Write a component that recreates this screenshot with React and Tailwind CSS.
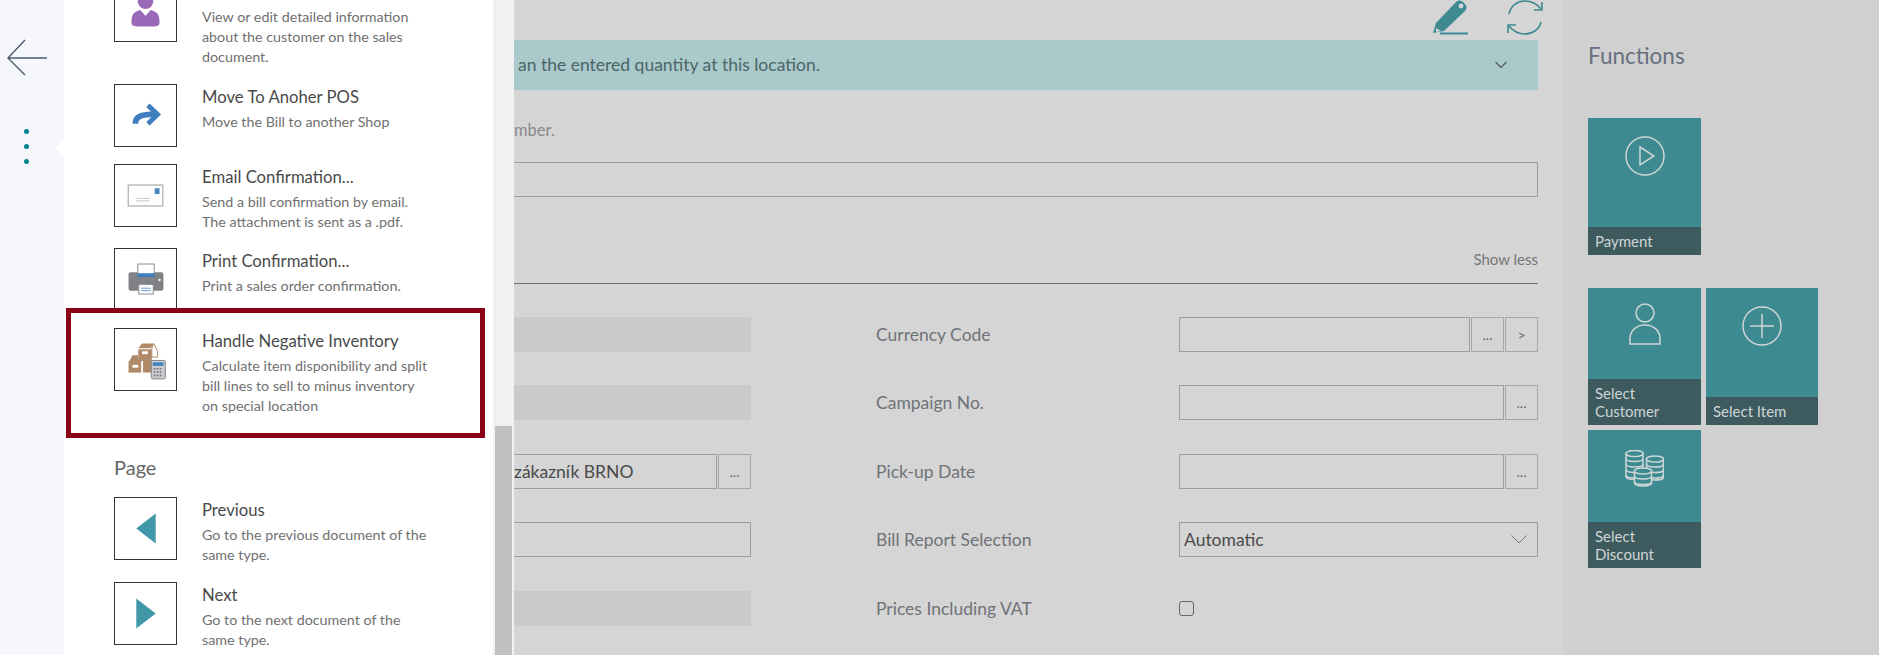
import React from 'react'

const font = { fontFamily: 'Lato, "Open Sans", sans-serif' }

const PersonIcon = () => (
  <svg viewBox="0 0 63 63" className="w-full h-full">
    <circle cx="31.5" cy="22" r="8" fill="#9a6ab8" />
    <path d="M17 44 C17 36 19 33 26 31 L31.5 37 L37 31 C44 33 46 36 46 44 C46 47 44 48 40 48 L23 48 C19 48 17 47 17 44 Z" fill="#9a6ab8" />
  </svg>
)

const MoveIcon = () => (
  <svg viewBox="0 0 63 63" className="w-full h-full" fill="none" stroke="#3f7fbf">
    <path d="M21 40 C21 33 26 30 42 30" strokeWidth="6" />
    <path d="M34 21 L44 30.5 L34 40" strokeWidth="5" />
  </svg>
)

const MailIcon = () => (
  <svg viewBox="0 0 63 63" className="w-full h-full">
    <rect x="13.7" y="20.7" width="35.6" height="21.6" fill="#fff" stroke="#b5b8b8" strokeWidth="1.4" />
    <rect x="41" y="24" width="5" height="6" fill="#4a86c0" />
    <path d="M22 34.5 H36 M22 37 H36" stroke="#c4c4c4" strokeWidth="1" />
  </svg>
)

const PrintIcon = () => (
  <svg viewBox="0 0 63 63" className="w-full h-full">
    <rect x="14" y="24" width="36" height="19" rx="2" fill="#808285" />
    <rect x="23.5" y="15.5" width="17" height="12" fill="#fff" stroke="#8a8a8a" />
    <rect x="23" y="25" width="18" height="4" fill="#3f7fbf" />
    <rect x="24.5" y="36.5" width="15" height="10" fill="#fff" stroke="#8a8a8a" />
    <path d="M27 40.5 H37 M27 43 H37" stroke="#5b93cc" strokeWidth="1" />
    <circle cx="46" cy="32" r="1.2" fill="#fff" />
  </svg>
)

const InventoryIcon = () => (
  <svg viewBox="0 0 63 63" className="w-full h-full">
    <path d="M28 15 H40 L37 20 H24 Z" fill="#b08a68" />
    <path d="M40 15 L44 23 V29 H38 V20 Z" fill="#fff" stroke="#b08a68" />
    <rect x="24" y="21" width="14" height="11" fill="#b08a68" />
    <rect x="28" y="23" width="6" height="3" fill="#fff" />
    <path d="M18 27 H24 V32 H38 V33 H15 Z" fill="#b08a68" />
    <rect x="14" y="33" width="13" height="12" fill="#b08a68" />
    <rect x="18" y="37" width="6" height="3" fill="#fff" />
    <rect x="29" y="33" width="9" height="12" fill="#b08a68" />
    <rect x="37.5" y="32.5" width="14.5" height="19" rx="1.5" fill="#c9cbce" stroke="#7f8387" />
    <rect x="39" y="34.5" width="11" height="3.5" fill="#3f7fbf" />
    <path d="M40 41 H49 M40 44.5 H49 M40 48 H49" stroke="#6d7175" strokeWidth="1.6" strokeDasharray="1.7 1.4" />
  </svg>
)

const PrevIcon = () => (
  <svg viewBox="0 0 63 63" className="w-full h-full">
    <polygon points="42,16 42,47 22,31.5" fill="#3f97a8" />
  </svg>
)

const NextIcon = () => (
  <svg viewBox="0 0 63 63" className="w-full h-full">
    <polygon points="22,16 22,47 42,31.5" fill="#3f97a8" />
  </svg>
)

const MenuItem = ({ icon: Icon, title, lines, className }) => (
  <div className={`flex gap-[25px] ${className || ''}`}>
    <div className="w-[63px] h-[63px] shrink-0 border border-[#333]">
      <Icon />
    </div>
    <div className="min-w-0">
      <div className="h-6 leading-[26px] text-[16.7px] text-[#4a4a4a] whitespace-nowrap">{title}</div>
      <div className="mt-1 text-[14.3px] leading-5 text-[#707070] whitespace-nowrap">
        {lines.map((l, i) => <div key={i}>{l}</div>)}
      </div>
    </div>
  </div>
)

const Input = ({ children }) => (
  <div className="flex-1 min-w-0 h-full border border-[#9a9da2] flex items-center pl-1 text-[17.5px] text-[#4a4a4a] whitespace-nowrap">
    {children}
  </div>
)

const Btn = ({ children }) => (
  <div className="w-[33px] ml-px h-full shrink-0 border border-[#a5a7aa] flex items-center justify-center text-[14px] text-[#666]">
    {children}
  </div>
)

const rows = [
  { h: 'h-[35px]', label: 'Currency Code' },
  { h: 'h-[36px]', label: 'Campaign No.' },
  { h: 'h-[35px]', label: 'Pick-up Date' },
  { h: 'h-[36px]', label: 'Bill Report Selection' },
  { h: 'h-[35px]', label: 'Prices Including VAT' },
]

const Tile = ({ label, bar, className, children }) => (
  <div className={`flex flex-col bg-[#3d8a91] ${className}`}>
    <div className="flex-1 flex justify-center">{children}</div>
    <div className={`${bar} bg-[#3d5a5e] px-[7px] text-[15px] leading-[18px] text-[#cfd5d5] flex items-end pb-[5px]`}>
      <span>{label}</span>
    </div>
  </div>
)

const tileStroke = { fill: 'none', stroke: '#cdd6d6', strokeWidth: 1.5 }

const Coin = ({ x, y, h }) => {
  const l = x - 8.5
  const r = x + 8.5
  const bands = []
  for (let b = 5; b <= h; b += 5.5) bands.push(y + b)
  return (
    <g {...tileStroke}>
      <path d={`M${l} ${y} V${y + h} C${l} ${y + h + 4} ${r} ${y + h + 4} ${r} ${y + h} V${y} Z`} fill="#3d8a91" />
      <ellipse cx={x} cy={y} rx="8.5" ry="3" fill="#3d8a91" />
      {bands.map((by) => (
        <path key={by} d={`M${l} ${by} C${l} ${by + 4} ${r} ${by + 4} ${r} ${by}`} />
      ))}
    </g>
  )
}

export default function App() {
  return (
    <div className="flex w-[1879px] h-[655px] overflow-hidden bg-[#d5d5d5]" style={font}>
      {/* left rail */}
      <div className="relative w-16 shrink-0 bg-[#f5f7fa]">
        <svg viewBox="0 0 48 48" className="w-12 h-12 ml-[3px] mt-[34px]" fill="none" stroke="#4a5c72" strokeWidth="1.4">
          <path d="M5 24 H44 M22 6 L5 24 L22 41" />
        </svg>
        <div className="mt-[47px] flex flex-col items-center gap-[10px] w-[53px]">
          <div className="w-[5px] h-[5px] rounded-full bg-[#00838f]" />
          <div className="w-[5px] h-[5px] rounded-full bg-[#00838f]" />
          <div className="w-[5px] h-[5px] rounded-full bg-[#00838f]" />
        </div>
        <div className="absolute right-[-6px] top-[142px] w-3 h-3 rotate-45 bg-white" />
      </div>

      {/* actions panel */}
      <div className="w-[429px] h-[655px] shrink-0 bg-white overflow-hidden">
        <div className="pl-[50px] -mt-[21px]">
          <MenuItem icon={PersonIcon} title="" lines={['View or edit detailed information', 'about the customer on the sales', 'document.']} />
          <MenuItem className="mt-[17px]" icon={MoveIcon} title="Move To Anoher POS" lines={['Move the Bill to another Shop']} />
          <MenuItem className="mt-[17px]" icon={MailIcon} title="Email Confirmation..." lines={['Send a bill confirmation by email.', 'The attachment is sent as a .pdf.']} />
          <MenuItem className="mt-4" icon={PrintIcon} title="Print Confirmation..." lines={['Print a sales order confirmation.']} />
        </div>
        <div className="relative ml-[2px] -mt-[3px] w-[419px] h-[130px] border-[5px] border-[#8a0014] bg-white pl-[43px] pt-[15px]">
          <MenuItem icon={InventoryIcon} title="Handle Negative Inventory" lines={['Calculate item disponibility and split', 'bill lines to sell to minus inventory', 'on special location']} />
        </div>
        <div className="pl-[50px]">
          <div className="mt-4 h-[26px] leading-[26px] text-[20px] text-[#666]">Page</div>
          <MenuItem className="mt-[17px]" icon={PrevIcon} title="Previous" lines={['Go to the previous document of the', 'same type.']} />
          <MenuItem className="mt-[17px]" icon={NextIcon} title="Next" lines={['Go to the next document of the', 'same type.']} />
        </div>
      </div>

      {/* scrollbar */}
      <div className="w-[21px] shrink-0 bg-[#f1f1f1] flex flex-col pt-[426px] px-[2px]">
        <div className="flex-1 bg-[#c1c1c1]" />
      </div>

      {/* dimmed card page */}
      <div className="w-[1049px] shrink-0 pr-[25px] flex flex-col">
        <div className="h-10 flex justify-end gap-[39px] -mr-[5px]">
          <svg viewBox="0 0 36 36" className="w-9 h-9" fill="none">
            <path d="M1 33 L4 23 L24 2 C26 0 29 0 31 2 L33 4 C35 6 35 9 33 11 L12 31 Z" fill="#3d8a91" />
            <path d="M4 28 L4 32 L9 31 Z" fill="#d5d5d5" />
            <path d="M8 33.5 H36" stroke="#3d8a91" strokeWidth="2" />
            <circle cx="29" cy="6" r="2.4" fill="#d5d5d5" />
          </svg>
          <svg viewBox="0 0 36 36" className="w-9 h-9" fill="none" stroke="#3d8a91" strokeWidth="1.6">
            <path d="M2 14 C4 5 11 1 18 1 C25 1 30 4 34 9" />
            <path d="M35 2 V10 H27" />
            <path d="M34 22 C32 30 25 34 18 34 C11 34 6 31 2 26" />
            <path d="M1 33 V25 H9" />
          </svg>
        </div>
        <div className="h-[50px] bg-[#a9c9cb] flex items-center justify-between pl-1 pr-[31px] text-[17.5px] text-[#4d6468]">
          <span className="pt-px">an the entered quantity at this location.</span>
          <svg viewBox="0 0 12 8" className="w-3 h-2" fill="none" stroke="#555" strokeWidth="1.2">
            <path d="M0.5 1 L6 6.5 L11.5 1" />
          </svg>
        </div>
        <div className="mt-[30px] h-5 leading-5 text-[16.5px] text-[#8a8a8a]">mber.</div>
        <div className="mt-[22px] h-[35px] border border-l-0 border-[#9a9da2]" />
        <div className="mt-[52px] h-[20px] leading-5 text-right text-[15px] text-[#777]">Show less</div>
        <div className="mt-[14px] h-px bg-[#6f7378]" />
        <div className="mt-[33px] grid grid-cols-[237px_1fr] gap-x-[125px] gap-y-[33px]">
          {rows.map((r, i) => (
            <React.Fragment key={r.label}>
              <div className={r.h}>
                {(i === 0 || i === 1 || i === 4) && <div className="h-[35px] bg-[#c9cacc]" />}
                {i === 2 && (
                  <div className="flex h-[35px]">
                    <div className="flex-1 h-full border border-l-0 border-[#9a9da2] flex items-center pt-[2px] text-[17.5px] text-[#4a4a4a]">zákazník BRNO</div>
                    <Btn>...</Btn>
                  </div>
                )}
                {i === 3 && <div className="h-[35px] border border-l-0 border-[#9a9da2]" />}
              </div>
              <div className={`${r.h} flex`}>
                <div className="w-[303px] shrink-0 h-[35px] flex items-center pt-[2px] text-[17.5px] text-[#6f7378]">{r.label}</div>
                <div className="flex-1 h-[35px] flex items-center">
                  {i === 0 && <><Input /><Btn>...</Btn><Btn>&gt;</Btn></>}
                  {(i === 1 || i === 2) && <><Input /><Btn>...</Btn></>}
                  {i === 3 && (
                    <div className="flex-1 h-full border border-[#9a9da2] flex items-center justify-between pl-1 pr-[10px] text-[17.5px] text-[#4a4a4a]">
                      <span className="pt-px">Automatic</span>
                      <svg viewBox="0 0 16 9" className="w-4 h-[9px]" fill="none" stroke="#777" strokeWidth="1">
                        <path d="M0.5 0.5 L8 8 L15.5 0.5" />
                      </svg>
                    </div>
                  )}
                  {i === 4 && <div className="w-[15px] h-[15px] rounded-[3px] border border-[#666]" />}
                </div>
              </div>
            </React.Fragment>
          ))}
        </div>
      </div>

      {/* functions */}
      <div className="flex-1 bg-[#d0d0d0] pl-[25px]">
        <div className="mt-[42px] h-7 leading-7 text-[22.5px] text-[#667080]">Functions</div>
        <Tile label="Payment" bar="h-7" className="w-[113px] mt-[48px] h-[137px]">
          <svg viewBox="0 0 42 42" className="w-[42px] h-[42px] mt-[17px]" {...tileStroke}>
            <circle cx="21" cy="21" r="19" />
            <path d="M16 12 L30 21 L16 30 Z" />
          </svg>
        </Tile>
        <div className="mt-[33px] flex gap-[5px]">
          <Tile label={<>Select<br />Customer</>} bar="h-[46px]" className="w-[113px] h-[137px]">
            <svg viewBox="0 0 32 42" className="w-8 h-[42px] mt-[15px]" {...tileStroke}>
              <circle cx="16" cy="10" r="9" />
              <path d="M1 41 V36 C1 27 8 22 16 22 C24 22 31 27 31 36 V41 Z" />
            </svg>
          </Tile>
          <Tile label="Select Item" bar="h-7" className="w-[112px] h-[137px]">
            <svg viewBox="0 0 42 42" className="w-[42px] h-[42px] mt-[17px]" {...tileStroke}>
              <circle cx="21" cy="21" r="19" />
              <path d="M21 9 V33 M9 21 H33" />
            </svg>
          </Tile>
        </div>
        <Tile label={<>Select<br />Discount</>} bar="h-[46px]" className="w-[113px] mt-[5px] h-[138px]">
          <svg viewBox="0 0 39 38" className="w-[39px] h-[38px] mt-5">
            <Coin x={9.5} y={3.5} h={23} />
            <Coin x={30} y={9} h={18} />
            <Coin x={18} y={21} h={12} />
          </svg>
        </Tile>
      </div>
    </div>
  )
}
